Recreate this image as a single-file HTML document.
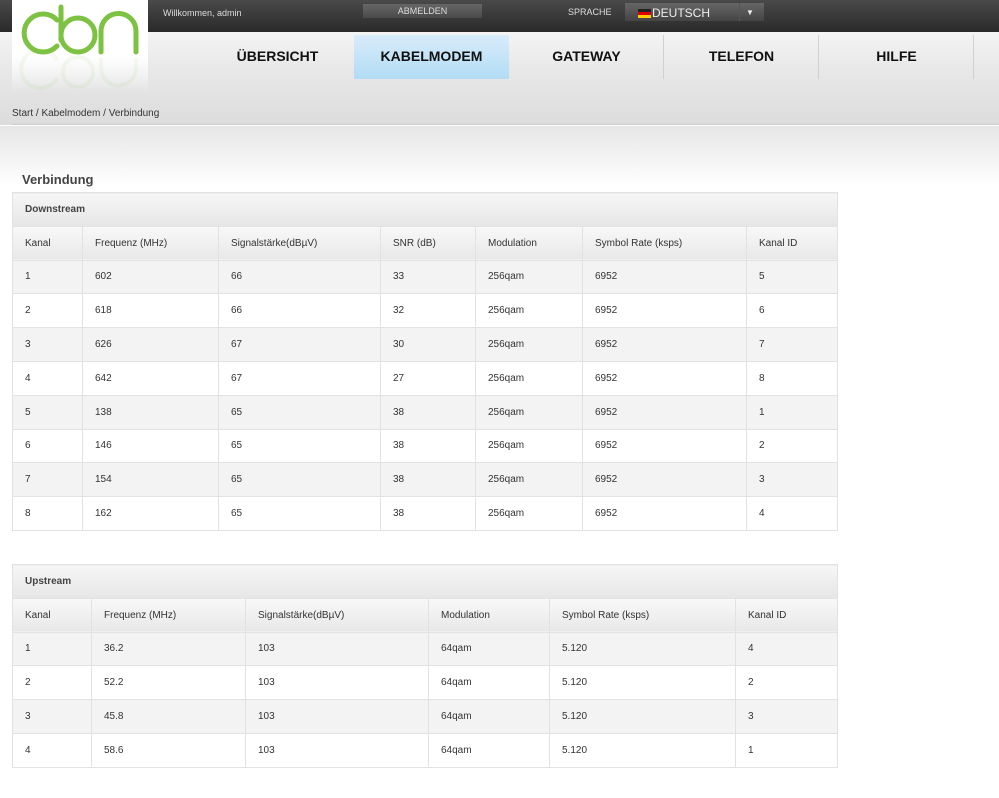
<!DOCTYPE html>
<html><head><meta charset="utf-8"><style>
*{margin:0;padding:0;box-sizing:border-box}
body{width:999px;height:798px;overflow:hidden;background:#fff;font-family:"Liberation Sans",Arial,sans-serif;position:relative}
.top{position:absolute;left:0;top:0;width:999px;height:32px;background:linear-gradient(#4a4a4a,#2a2a2a)}
.bg{position:absolute;left:0;top:32px;width:999px;height:93px;background:linear-gradient(#f4f4f4,#e8e8e8 40%,#dcdcdc)}
.bg2{position:absolute;left:0;top:126px;width:999px;height:60px;background:linear-gradient(#e6e6e6,#fff)}
.line{position:absolute;left:12px;top:125px;width:987px;height:1px;background:#fff;box-shadow:0 -1px 0 #ccc}
.logo{position:absolute;left:12px;top:0;width:136px;height:92px;background:linear-gradient(#fff 60%,rgba(240,240,240,0))}
.t{position:absolute;color:#ddd;font-size:9px}
.btn{position:absolute;left:363px;top:4px;width:119px;height:14px;background:linear-gradient(#666,#4a4a4a);color:#ddd;font-size:9px;text-align:center;line-height:15px}
.sel{position:absolute;left:625px;top:3px;width:139px;height:18px;background:linear-gradient(#666,#444);color:#eee;font-size:12px;line-height:20px}
.nav{position:absolute;top:35px;height:44px;font-weight:bold;font-size:14px;color:#111;text-align:center;line-height:42px;width:155px}
.sep{position:absolute;top:35px;width:1px;height:44px;background:#d0d0d0}
table{position:absolute;left:12px;width:826px;border-collapse:collapse;font-size:10px;color:#333}
td{height:33.8px;border:1px solid #e2e2e2;padding-left:12px}
tr.h td{background:linear-gradient(#f8f8f8,#e8e8e8)}
tr.g td{background:#f3f3f3}
td.cap{background:linear-gradient(#f6f6f6,#e6e6e6);font-weight:bold;color:#444;font-size:10px}
</style></head><body>
<div class="top"></div>
<div class="bg"></div><div class="bg2"></div><div class="line"></div>
<div class="logo">
<svg width="136" height="90" viewBox="0 0 136 90"><g fill="none" stroke="#7dc242" stroke-width="5" stroke-linecap="round">
<path d="M45 20 A19 19 0 1 0 45 46"/>
<circle cx="66" cy="35" r="17"/><path d="M49 7 V40"/>
<path d="M89 52 V31 A17.5 17.5 0 0 1 124 31 V52"/></g>
<g fill="none" stroke="#7dc242" stroke-width="4" opacity="0.07">
<path d="M45 78 A19 19 0 1 1 45 60"/><circle cx="66" cy="72" r="15"/><path d="M89 58 V68 A17 17 0 0 0 124 68 V58"/></g></svg>
</div>
<div class="t" style="left:163px;top:8px">Willkommen, admin</div>
<div class="btn">ABMELDEN</div>
<div class="t" style="left:568px;top:7px">SPRACHE</div>
<div class="sel"><span style="display:inline-block;width:13px;height:9px;margin:0 1px 0 13px;vertical-align:-1px;background:linear-gradient(#222 33%,#d00 33% 66%,#fc0 66%)"></span>DEUTSCH<span style="position:absolute;left:114px;top:0;width:1px;height:18px;background:#555"></span><span style="position:absolute;left:121px;top:0;font-size:8px">▼</span></div>
<div class="nav" style="left:200px">ÜBERSICHT</div>
<div class="nav" style="left:354px;background:linear-gradient(#d8ecfa,#b2dcf5);width:155px">KABELMODEM</div>
<div class="nav" style="left:509px">GATEWAY</div>
<div class="nav" style="left:664px">TELEFON</div>
<div class="nav" style="left:819px">HILFE</div>
<div class="sep" style="left:663px"></div><div class="sep" style="left:818px"></div><div class="sep" style="left:973px"></div>
<div style="position:absolute;left:12px;top:108px;font-size:10px;color:#333">Start / Kabelmodem / Verbindung</div>
<div style="position:absolute;left:22px;top:172px;font-size:13px;font-weight:bold;color:#444">Verbindung</div>
<table style="top:192px">
<colgroup><col style="width:70px"><col style="width:136px"><col style="width:162px"><col style="width:95px"><col style="width:107px"><col style="width:164px"><col></colgroup>
<tr><td class="cap" colspan="7">Downstream</td></tr>
<tr class="h"><td>Kanal</td><td>Frequenz (MHz)</td><td>Signalstärke(dBµV)</td><td>SNR (dB)</td><td>Modulation</td><td>Symbol Rate (ksps)</td><td>Kanal ID</td></tr>
<tr class="g"><td>1</td><td>602</td><td>66</td><td>33</td><td>256qam</td><td>6952</td><td>5</td></tr>
<tr><td>2</td><td>618</td><td>66</td><td>32</td><td>256qam</td><td>6952</td><td>6</td></tr>
<tr class="g"><td>3</td><td>626</td><td>67</td><td>30</td><td>256qam</td><td>6952</td><td>7</td></tr>
<tr><td>4</td><td>642</td><td>67</td><td>27</td><td>256qam</td><td>6952</td><td>8</td></tr>
<tr class="g"><td>5</td><td>138</td><td>65</td><td>38</td><td>256qam</td><td>6952</td><td>1</td></tr>
<tr><td>6</td><td>146</td><td>65</td><td>38</td><td>256qam</td><td>6952</td><td>2</td></tr>
<tr class="g"><td>7</td><td>154</td><td>65</td><td>38</td><td>256qam</td><td>6952</td><td>3</td></tr>
<tr><td>8</td><td>162</td><td>65</td><td>38</td><td>256qam</td><td>6952</td><td>4</td></tr>
</table>
<table style="top:564px">
<colgroup><col style="width:79px"><col style="width:154px"><col style="width:183px"><col style="width:121px"><col style="width:186px"><col></colgroup>
<tr><td class="cap" colspan="6">Upstream</td></tr>
<tr class="h"><td>Kanal</td><td>Frequenz (MHz)</td><td>Signalstärke(dBµV)</td><td>Modulation</td><td>Symbol Rate (ksps)</td><td>Kanal ID</td></tr>
<tr class="g"><td>1</td><td>36.2</td><td>103</td><td>64qam</td><td>5.120</td><td>4</td></tr>
<tr><td>2</td><td>52.2</td><td>103</td><td>64qam</td><td>5.120</td><td>2</td></tr>
<tr class="g"><td>3</td><td>45.8</td><td>103</td><td>64qam</td><td>5.120</td><td>3</td></tr>
<tr><td>4</td><td>58.6</td><td>103</td><td>64qam</td><td>5.120</td><td>1</td></tr>
</table>
</body></html>
